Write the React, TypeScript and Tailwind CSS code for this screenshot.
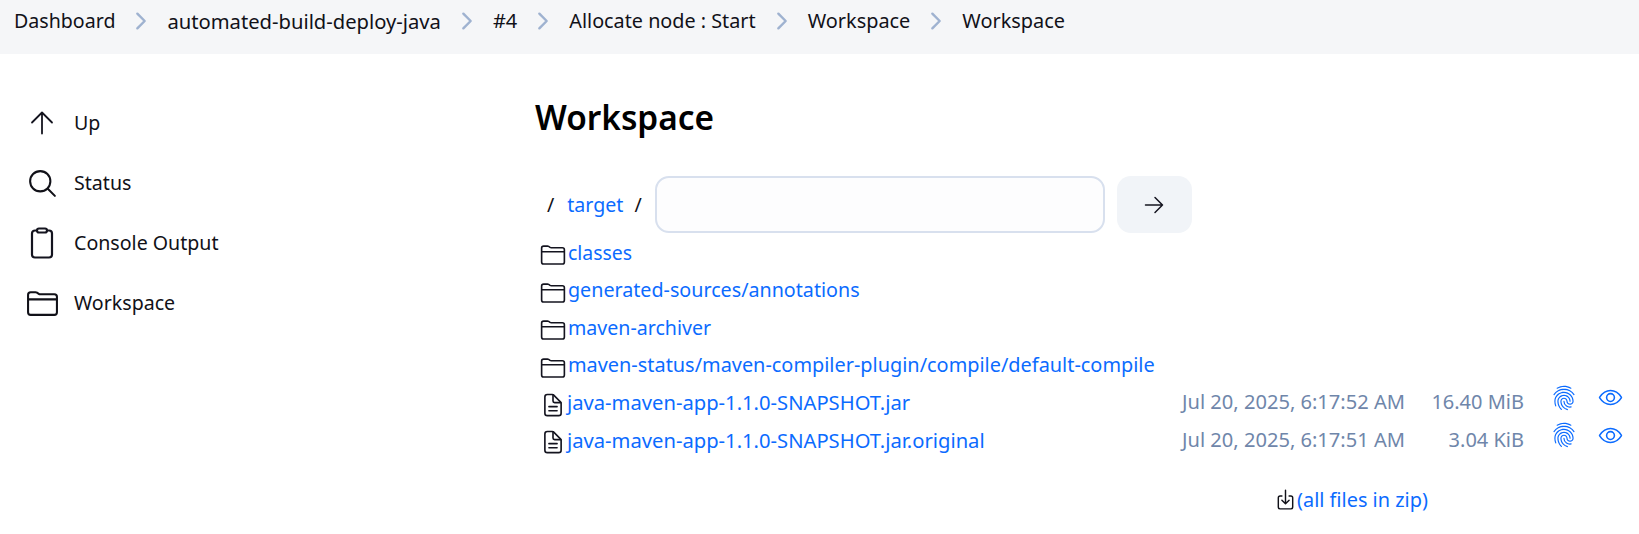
import React from "react";
import {
  IoSearchOutline,
  IoFolderOutline,
  IoDocumentTextOutline,
  IoEyeOutline,
  IoFingerPrintOutline,
  IoDownloadOutline,
  IoChevronForwardOutline,
} from "react-icons/io5";

const crumbs = [
  { text: "Dashboard", cls: "text-[19.6px]" },
  { text: "automated-build-deploy-java", cls: "text-[20.2px]" },
  { text: "#4", cls: "text-[20px]" },
  { text: "Allocate node : Start", cls: "text-[19.8px]" },
  { text: "Workspace", cls: "text-[19.9px]" },
  { text: "Workspace", cls: "text-[19.9px]" },
];

function Clipboard() {
  return (
    <svg width="30" height="32" viewBox="0 0 30 32" fill="none" stroke="#14141f" strokeWidth="2.2" strokeLinejoin="round">
      <rect x="5" y="3.5" width="20" height="27" rx="3" />
      <rect x="10" y="1.5" width="10" height="4" rx="2" fill="#fff" />
    </svg>
  );
}

function ArrowUp() {
  return (
    <svg width="30" height="30" viewBox="0 0 30 30" fill="none" stroke="#14141f" strokeWidth="1.8" strokeLinecap="round" strokeLinejoin="round">
      <path d="M15 4.5v21M5 14.5 15 4.5l10 10" />
    </svg>
  );
}

function ArrowRight() {
  return (
    <svg width="24" height="24" viewBox="0 0 24 24" fill="none" stroke="#14141f" strokeWidth="1.5" strokeLinecap="round" strokeLinejoin="round">
      <path d="M3.5 12h17M13 4.5l7.5 7.5-7.5 7.5" />
    </svg>
  );
}

const side = [
  { label: "Up", icon: <ArrowUp /> },
  { label: "Status", icon: <IoSearchOutline size={33} className="shrink-0" /> },
  { label: "Console Output", icon: <Clipboard /> },
  { label: "Workspace", icon: <IoFolderOutline size={33} className="shrink-0" /> },
];

const dirs = [
  { text: "classes", cls: "text-[19.4px]" },
  { text: "generated-sources/annotations", cls: "text-[19.7px]" },
  { text: "maven-archiver", cls: "text-[19.6px]" },
  { text: "maven-status/maven-compiler-plugin/compile/default-compile", cls: "text-[19.9px]" },
];
const files = [
  { name: "java-maven-app-1.1.0-SNAPSHOT.jar", date: "Jul 20, 2025, 6:17:52 AM", size: "16.40 MiB" },
  { name: "java-maven-app-1.1.0-SNAPSHOT.jar.original", date: "Jul 20, 2025, 6:17:51 AM", size: "3.04 KiB" },
];

export default function App() {
  return (
    <div className="h-[534px] w-[1639px] overflow-hidden bg-white text-[19.6px] leading-[28px] text-[#111118] font-['Noto_Sans',sans-serif]">
      <nav className="flex h-[54px] items-start bg-[#f5f6f8] pl-[14px] pt-[7px]">
        {crumbs.map((c, i) => (
          <React.Fragment key={i}>
            <span className={"whitespace-nowrap " + c.cls}>{c.text}</span>
            {i < crumbs.length - 1 && (
              <span className="flex w-[52px] justify-center pt-[1px] text-[#9fb2d0]">
                <IoChevronForwardOutline size={26} />
              </span>
            )}
          </React.Fragment>
        ))}
      </nav>
      <div className="flex">
        <aside className="w-[535px] shrink-0 pl-[27px] pt-[39px]">
          {side.map((s) => (
            <div key={s.label} className="flex h-[60px] items-center">
              <span className="flex w-[30px] justify-center">{s.icon}</span>
              <span className="ml-[17px]">{s.label}</span>
            </div>
          ))}
        </aside>
        <main className="w-[1104px] pt-[40px]">
          <h1 className="text-[33.4px] font-semibold leading-[46px] text-black">Workspace</h1>
          <div className="mt-[36px] flex h-[57px] items-center pl-[12px]">
            <span>/</span>
            <a className="ml-[13px] text-[#0b6bff]">target</a>
            <span className="ml-[11px]">/</span>
            <div className="ml-[13px] h-[57px] w-[450px] rounded-[14px] border-2 border-[#d8e0ee] bg-[#fdfdfe]" />
            <button className="ml-[12px] flex h-[57px] w-[75px] items-center justify-center rounded-[14px] bg-[#f1f4f8]">
              <ArrowRight />
            </button>
          </div>
          <div className="mt-[1px]">
            {dirs.map((d) => (
              <div key={d.text} className="flex h-[37.5px] items-center text-[#0b6bff]">
                <IoFolderOutline size={26} className="ml-[5px] text-[#14141f] shrink-0 mt-[5px]" />
                <span className={"ml-[2px] whitespace-nowrap " + d.cls}>{d.text}</span>
              </div>
            ))}
            {files.map((f) => (
              <div key={f.name} className="flex h-[37.5px] items-center">
                <IoDocumentTextOutline size={26} className="text-[#14141f] shrink-0 mt-[4px] ml-[5px]" />
                <span className="mb-[1px] ml-[1px] w-[615px] whitespace-nowrap text-[20.2px] text-[#0b6bff]">{f.name}</span>
                <span className="mb-[1px] w-[224px] whitespace-nowrap text-[20.1px] text-[#6f86aa]">{f.date}</span>
                <span className="mb-[1px] w-[118px] whitespace-nowrap text-right text-[20px] text-[#6f86aa]">{f.size}</span>
                <span className="ml-[27px] mb-[10px] flex w-[47px] text-[#0b6bff]">
                  <IoFingerPrintOutline size={26} />
                </span>
                <span className="mb-[10px] text-[#0b6bff]">
                  <IoEyeOutline size={25} />
                </span>
              </div>
            ))}
          </div>
          <div className="mt-[22px] flex h-[37px] items-center pl-[739px]">
            <IoDownloadOutline size={23} />
            <span className="text-[19.9px] text-[#0b6bff]">(all files in zip)</span>
          </div>
        </main>
      </div>
    </div>
  );
}
